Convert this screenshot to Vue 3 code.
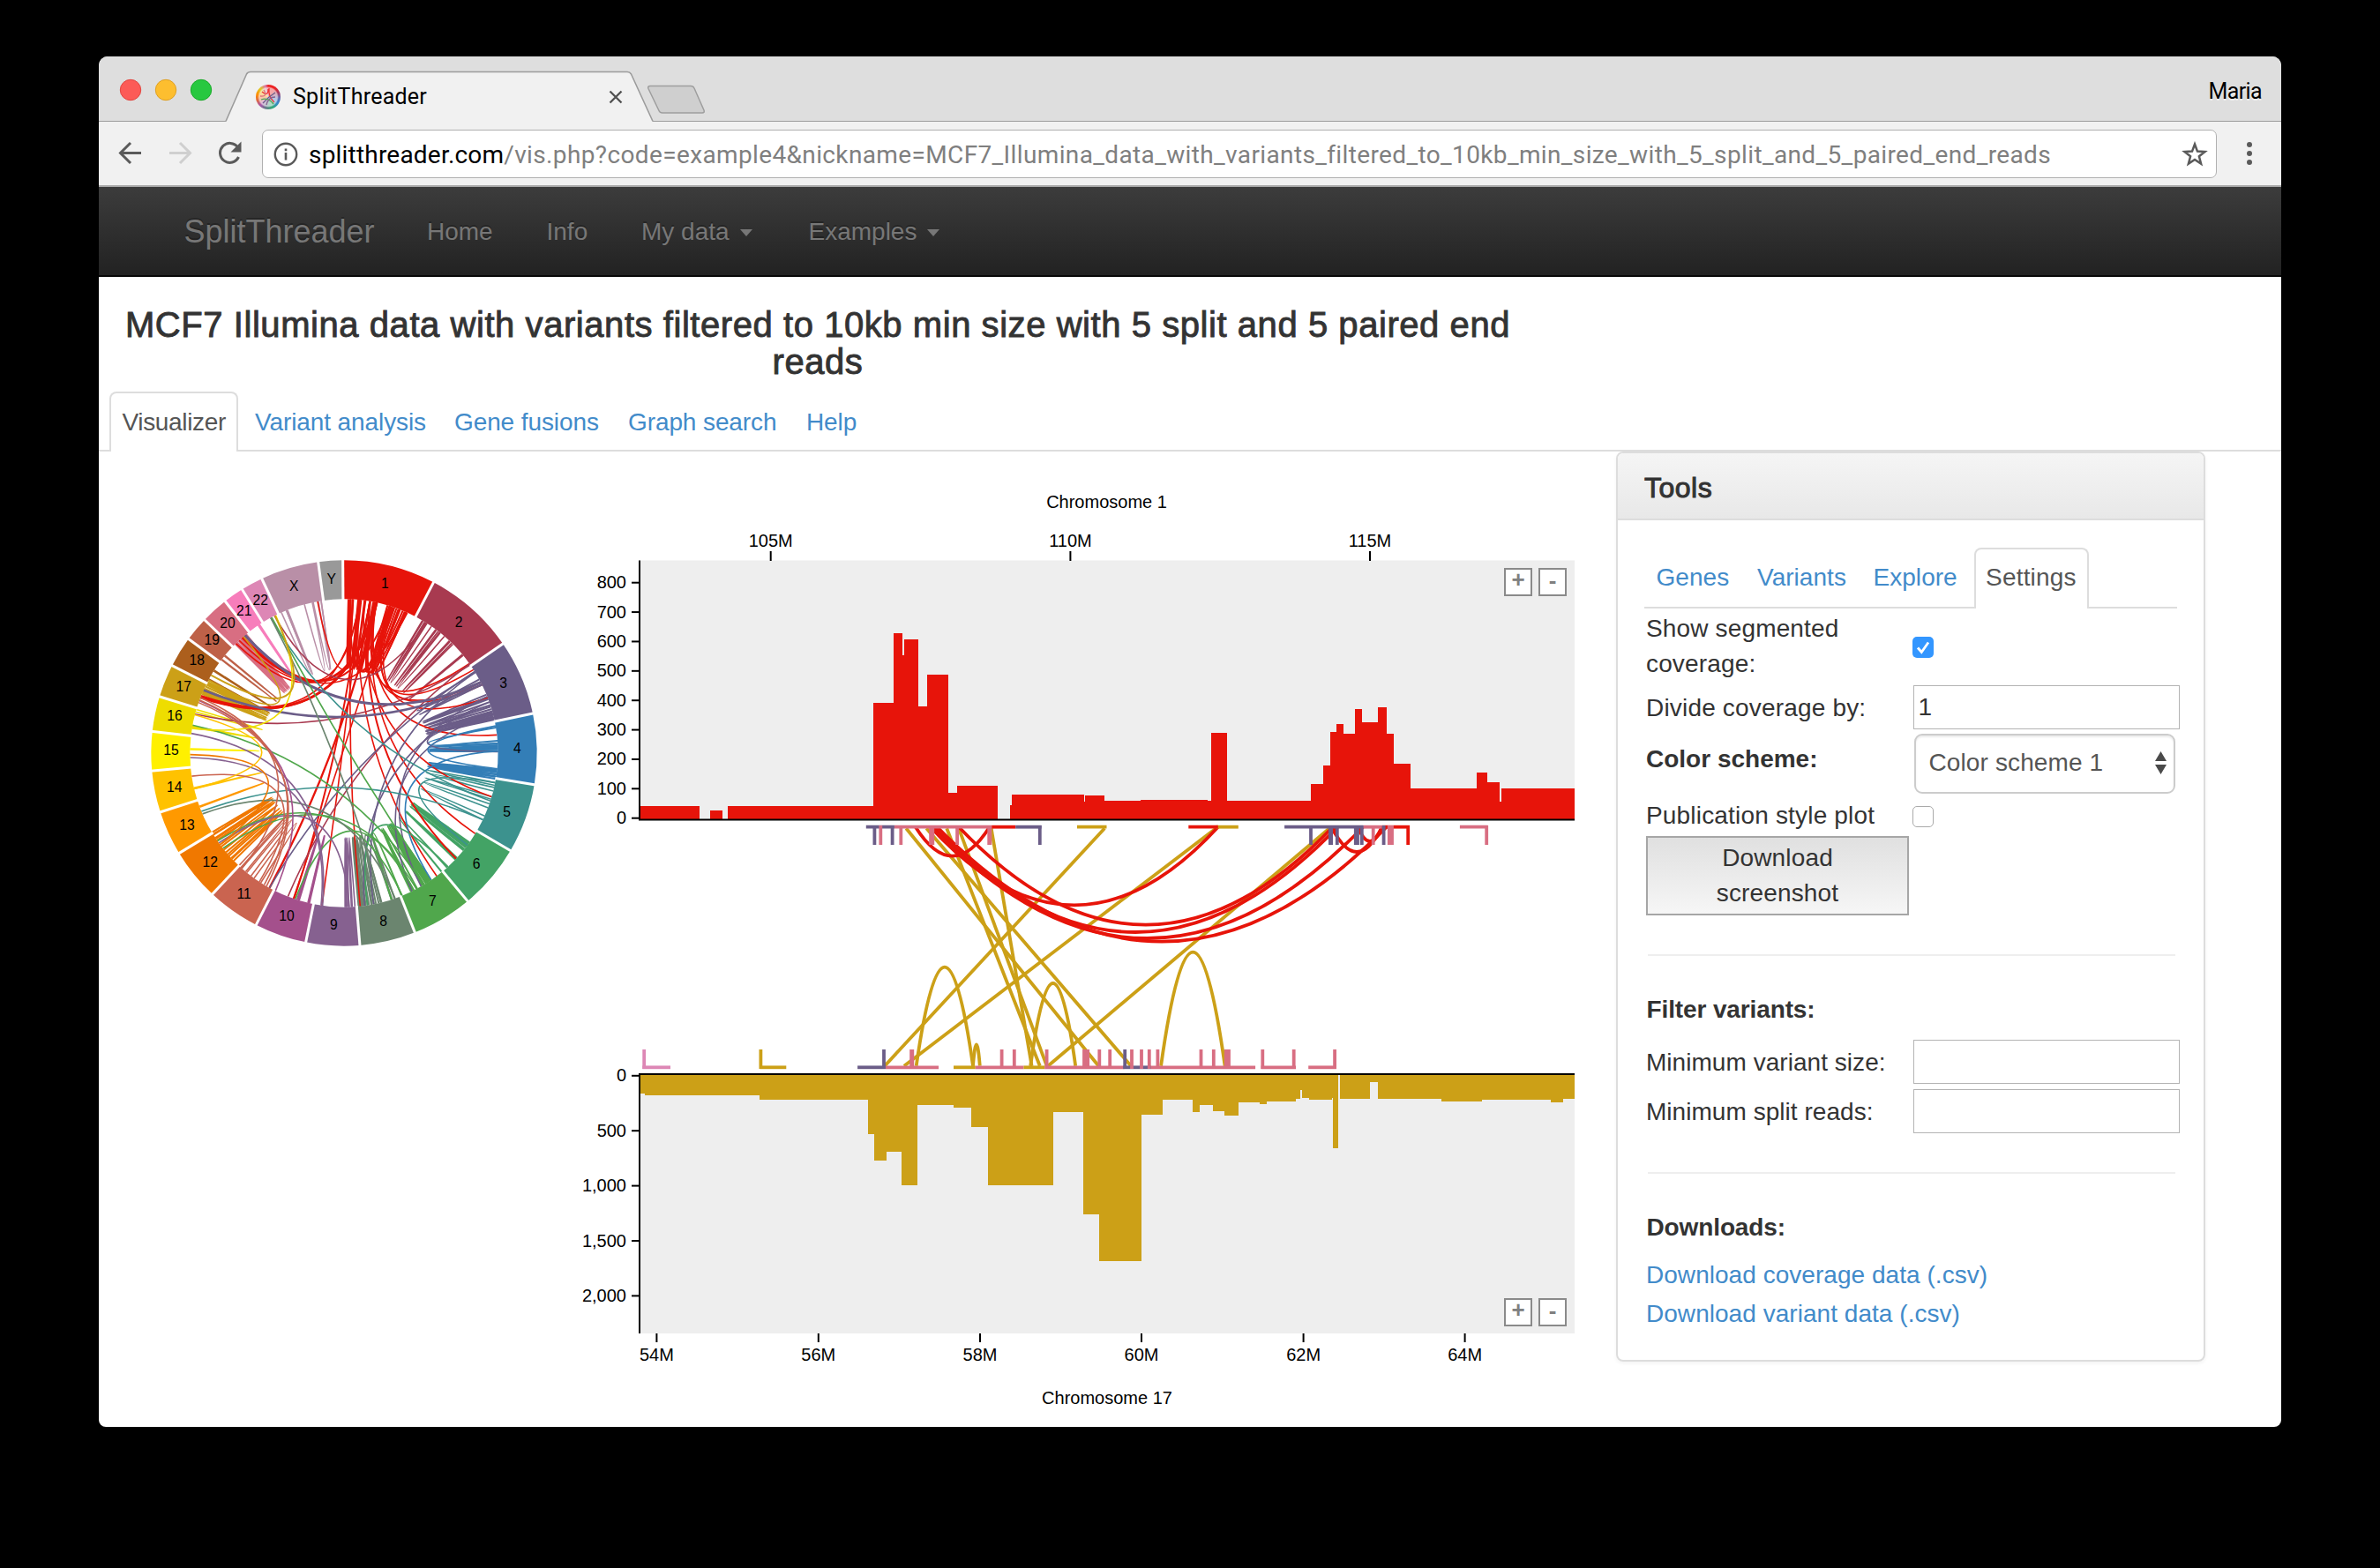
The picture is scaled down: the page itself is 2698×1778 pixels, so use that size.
<script setup>
const path = 'vis.php?code=example4&nickname=MCF7_Illumina_data_with_variants_filtered_to_10kb_min_size_with_5_split_and_5_paired_end_reads'

// ---- genome wheel -------------------------------------------------------
const C = { x: 720, y: 732, outer: 656, inner: 524 }
const colors = {
  1: '#e7140a', 2: '#a83a50', 3: '#6b5d88', 4: '#337eb7', 5: '#3c928e', 6: '#43a365',
  7: '#50a74c', 8: '#6b856f', 9: '#866190', 10: '#a4508c', 11: '#ca6450', 12: '#f07800',
  13: '#ff9900', 14: '#ffc200', 15: '#fff000', 16: '#eedd00', 17: '#cca017', 18: '#ac5f1d',
  19: '#be6148', 20: '#d86e82', 21: '#f77dbb', 22: '#dd87b5', X: '#b98fa7', Y: '#999999'
}
// name, end boundary on the outer rim, label centre
const chroms = [
  ['1', 1024, 152, 859, 155], ['2', 1260, 360, 1110, 287], ['3', 1363, 597, 1262, 493],
  ['4', 1371, 840, 1309, 716], ['5', 1285, 1063, 1274, 931], ['6', 1140, 1235, 1170, 1108],
  ['7', 961, 1342, 1021, 1234], ['8', 774, 1387, 854, 1303], ['9', 590, 1375, 685, 1315],
  ['10', 423, 1312, 525, 1285], ['11', 274, 1210, 380, 1211], ['12', 163, 1070, 265, 1103],
  ['13', 97, 932, 186, 976], ['14', 67, 792, 143, 847], ['15', 68, 658, 132, 721],
  ['16', 94, 540, 144, 605], ['17', 137, 435, 175, 505], ['18', 193, 345, 220, 415],
  ['19', 249, 282, 271, 347], ['20', 316, 216, 324, 290], ['21', 374, 176, 380, 247],
  ['22', 440, 138, 436, 211], ['X', 632, 82, 550, 163], ['Y', 716, 76, 677, 139]
]
const angle = (x, y) => Math.atan2(x - C.x, C.y - y)
const at = (a, r) => [C.x + Math.sin(a) * r, C.y - Math.cos(a) * r]
const f = (n) => n.toFixed(1)
const wheel = chroms.map((c, i) => {
  const prev = chroms[(i + chroms.length - 1) % chroms.length]
  const a0 = angle(prev[1], prev[2])
  const a1 = angle(c[1], c[2])
  const [p, q, r, s] = [at(a0, C.outer), at(a1, C.outer), at(a1, C.inner), at(a0, C.inner)]
  const g0 = at(a1, C.inner - 3)
  const g1 = at(a1, C.outer + 4)
  return {
    name: c[0], lx: c[3], ly: c[4] + 16, fill: colors[c[0]],
    d: `M${f(p[0])} ${f(p[1])}A${C.outer} ${C.outer} 0 0 1 ${f(q[0])} ${f(q[1])}L${f(r[0])} ${f(r[1])}A${C.inner} ${C.inner} 0 0 0 ${f(s[0])} ${f(s[1])}Z`,
    gap: `M${f(g0[0])} ${f(g0[1])}L${f(g1[0])} ${f(g1[1])}`
  }
})
function chord(a, b) {
  const p = at(a, C.inner)
  const q = at(b, C.inner)
  const cx = C.x * 0.9 + ((p[0] + q[0]) / 2) * 0.1
  const cy = C.y * 0.9 + ((p[1] + q[1]) / 2) * 0.1
  return `M${f(p[0])} ${f(p[1])}Q${f(cx)} ${f(cy)} ${f(q[0])} ${f(q[1])}`
}
// short-range variants: chromosome, x, y, angular span in degrees
const local = [
  [15, 197, 720, 0.3], [14, 212, 853, 0.4], [13, 232, 915, 0.4], [16, 207, 645, 0.4], [16, 215, 592, 1],
  [18, 280, 455, 0.4], [18, 262, 485, 0.4], [19, 315, 403, 0.3], [19, 302, 414, 0.3],
  [12, 275, 1010, 1], [12, 283, 1020, 1.6], [12, 290, 1030, 1], [12, 300, 1042, 2], [12, 312, 1060, 1.5], [12, 326, 1075, 1], [12, 336, 1090, 1.2], [12, 345, 1098, 1],
  [11, 370, 1120, 1], [11, 388, 1132, 2], [11, 405, 1148, 2], [11, 440, 1168, 3],
  [10, 565, 1230, 0.5], [10, 568, 1232, 0.3], [10, 603, 1240, 0.4], [10, 600, 1240, 0.3],
  [9, 728, 1253, 0.5], [9, 735, 1253, 0.6], [9, 745, 1253, 1], [9, 757, 1253, 1],
  [8, 775, 1252, 0.6], [8, 780, 1252, 0.8], [8, 786, 1252, 1], [8, 794, 1251, 1.4], [8, 805, 1250, 1.5], [8, 822, 1245, 1], [8, 838, 1243, 2.5], [8, 845, 1241, 5], [8, 890, 1222, 1], [8, 880, 1226, 6],
  [7, 990, 1178, 0.7], [7, 997, 1173, 0.8], [7, 1003, 1169, 0.5], [7, 1009, 1166, 0.8], [7, 1014, 1162, 1], [7, 955, 1197, 1], [7, 967, 1190, 2], [7, 915, 1215, 4],
  [6, 1145, 1035, 0.5], [6, 1140, 1042, 0.6], [6, 1135, 1048, 0.5], [6, 1128, 1057, 0.6], [6, 1100, 1090, 0.4], [6, 1103, 1087, 0.5], [6, 1072, 1123, 2.6],
  [5, 1232, 832, 1], [5, 1228, 848, 1.4], [5, 1222, 880, 1], [5, 1216, 905, 1.6], [5, 1196, 945, 1.5],
  [4, 1243, 690, 1], [4, 1243, 705, 0.6], [4, 1244, 712, 0.6], [4, 1244, 718, 0.7], [4, 1240, 788, 0.6], [4, 1239, 797, 0.8], [4, 1238, 804, 0.8], [4, 1237, 812, 0.8], [4, 1236, 645, 6],
  [3, 1165, 458, 3], [3, 1185, 490, 1], [3, 1200, 535, 1], [3, 1205, 545, 0.6], [3, 1210, 560, 1.2], [3, 1215, 575, 1], [3, 1222, 590, 0.7], [3, 1224, 598, 0.5], [3, 1228, 606, 0.7], [3, 1230, 612, 0.7],
  [2, 985, 283, 0.3], [2, 993, 288, 0.5], [2, 1001, 292, 2], [2, 1031, 312, 0.4], [2, 1040, 318, 0.6], [2, 1047, 323, 2], [2, 1078, 350, 0.4], [2, 1086, 358, 0.6], [2, 1120, 398, 0.5],
  [20, 352, 362, 0.5], [20, 358, 357, 0.8], [20, 364, 350, 0.8], [20, 372, 344, 0.9], [20, 378, 339, 0.6], [20, 384, 334, 0.7], [21, 430, 300, 0.3], [21, 433, 300, 0.3],
  [17, 240, 532, 0.6], [17, 242, 526, 0.6], [17, 245, 517, 0.5], [17, 248, 505, 0.8], [17, 252, 498, 0.6], [17, 256, 490, 0.8],
  ['X', 508, 256, 2], ['X', 525, 250, 0.5], ['X', 585, 225, 3], ['X', 615, 218, 3], ['X', 633, 215, 1],
  [1, 735, 208, 0.6], [1, 742, 208, 1], [1, 750, 208, 2], [1, 771, 210, 0.8], [1, 775, 210, 2], [1, 790, 212, 2], [1, 808, 215, 2], [1, 820, 217, 1],
  [1, 826, 218, 0.6], [1, 830, 218, 7], [1, 832, 218, 9], [1, 868, 229, 1], [1, 875, 231, 4], [1, 880, 233, 6], [1, 890, 236, 1], [1, 905, 242, 3], [1, 770, 210, 13], [1, 742, 208, 20], [1, 822, 217, 12]
]
// chromosomes whose short-range variants pile up into thick bundles
const dense = [1, 3, 4, 6, 7, 8, 12, 17, 20]
// long-range variants: chromosome colour, x1, y1, x2, y2, width
const long = [
  [1, 828, 218, 235, 542, 8], [1, 833, 218, 236, 546, 6], [1, 773, 210, 238, 538],
  [1, 828, 218, 375, 340, 8], [1, 832, 218, 365, 350], [1, 773, 210, 355, 362], [1, 875, 232, 385, 334, 6], [1, 935, 255, 378, 339],
  [1, 808, 215, 630, 216], [1, 775, 210, 550, 1228, 6], [1, 875, 232, 548, 1226],
  [1, 830, 218, 468, 1188, 7], [1, 775, 210, 645, 1248], [1, 748, 208, 775, 1253],
  [1, 770, 210, 1035, 1150], [1, 810, 215, 1100, 1090, 6], [1, 826, 218, 1165, 1005],
  [1, 790, 212, 1220, 880], [1, 830, 218, 1240, 670], [1, 875, 232, 1165, 445],
  [1, 882, 234, 1203, 545], [1, 830, 218, 1185, 492], [1, 868, 229, 1188, 500], [1, 822, 217, 1150, 425],
  [2, 1148, 432, 215, 600], [2, 1145, 430, 530, 1218], [2, 1000, 292, 485, 268],
  [3, 1187, 490, 385, 333, 9], [3, 1190, 498, 243, 518, 8], [3, 1163, 455, 468, 1188], [3, 1210, 560, 790, 1250],
  [3, 1165, 458, 820, 1243], [3, 1225, 600, 950, 1200], [3, 1205, 540, 980, 1182], [3, 1220, 600, 1243, 727],
  [4, 1243, 725, 1015, 1162, 5], [4, 1240, 785, 1232, 640],
  [5, 1218, 895, 472, 275], [5, 1192, 958, 235, 930], [5, 1230, 832, 1140, 1045],
  [6, 1075, 1120, 800, 1250],
  [7, 205, 637, 990, 1178, 5], [7, 475, 272, 1012, 1164, 5], [7, 290, 1030, 918, 1217], [7, 308, 1056, 965, 1192], [7, 555, 1228, 958, 1198],
  [8, 471, 272, 848, 1240, 5], [8, 240, 938, 893, 1224, 5],
  [9, 197, 747, 642, 1249], [9, 200, 665, 647, 1250, 5], [9, 295, 1037, 738, 1254, 5],
  [10, 231, 555, 487, 1200], [11, 231, 562, 458, 1182], [11, 233, 553, 450, 1178], [11, 205, 810, 432, 1170], [11, 236, 545, 375, 1122],
  [12, 197, 737, 300, 1042], [14, 212, 853, 215, 602], [16, 206, 648, 490, 268], [17, 270, 468, 487, 268, 6], [17, 256, 490, 380, 338]
]
const links = [
  ...local.map(([c, x, y, w]) => ({ d: chord(angle(x, y), angle(x, y) + (w * Math.PI) / 180), c: colors[c], w: dense.includes(c) ? 6.2 : 4.8 })),
  ...long.map(([c, a, b, x, y, w]) => ({ d: chord(angle(a, b), angle(x, y)), c: colors[c], w: w || 4.8 }))
]

// ---- coverage tracks ----------------------------------------------------
// each step: right edge, height edge
const topSteps = [
  [793, 914], [805, 929], [819, 919], [825, 929], [990, 914], [1013, 797], [1023, 718], [1025, 743], [1041, 725], [1051, 801],
  [1075, 765], [1085, 899], [1131, 891], [1145, 929], [1147, 913], [1229, 901], [1230, 909], [1252, 902], [1293, 908],
  [1369, 907], [1373, 908], [1391, 831], [1486, 908], [1500, 889], [1508, 868], [1515, 830], [1523, 821], [1536, 832],
  [1544, 804], [1562, 819], [1572, 802], [1580, 832], [1599, 866], [1674, 894], [1686, 876], [1700, 887], [1702, 909], [1785, 894]
]
const bottomSteps = [
  [731, 1240], [861, 1242], [984, 1247], [991, 1286], [1005, 1316], [1022, 1306], [1040, 1344], [1081, 1253], [1101, 1256],
  [1120, 1278], [1194, 1344], [1228, 1261], [1246, 1377], [1294, 1430], [1318, 1264], [1352, 1247], [1360, 1261], [1375, 1253],
  [1388, 1260], [1404, 1265], [1428, 1250], [1436, 1252], [1469, 1249], [1474, 1246], [1476, 1236], [1484, 1245], [1510, 1247],
  [1511, 1245], [1517, 1302], [1519, 1219], [1553, 1246], [1562, 1227], [1634, 1246], [1680, 1249], [1758, 1247], [1772, 1250], [1785, 1246]
]
const area = (steps, base) => `M726 ${base}` + steps.map(([x, y]) => `V${y}H${x}`).join('') + `V${base}Z`
const topY = [800, 700, 600, 500, 400, 300, 200, 100, 0].map((v) => ({ v, y: 927.7 - v * 0.33375 }))
const bottomY = ['0', '500', '1,000', '1,500', '2,000'].map((v, i) => ({ v, y: 1219.8 + i * 62.4 }))
const topX = [['105M', 873.7], ['110M', 1213.4], ['115M', 1553]]
const bottomX = [['54M', 744.4], ['56M', 927.8], ['58M', 1111], ['60M', 1294], ['62M', 1477.6], ['64M', 1660.6]]

const red = colors[1], gold = colors[17], pink = colors[20], purple = colors[3]
const px = (v) => +(940 + v / 2.1778).toFixed(1)
const py = (v) => +(910 + v / 3).toFixed(1)
const lines = [[680, 137], [955, 185], [1235, 540], [190, 665], [240, 745], [290, 520], [320, 537], [400, 500]]
  .map(([a, b]) => `M${px(a)} ${py(88)}L${px(b)} ${py(896)}`)
const arc = (x1, x2, y, peak) => `M${px(x1)} ${py(y)}Q${px((x1 + x2) / 2)} ${py(2 * peak - y)} ${px(x2)} ${py(y)}`
const goldArcs = [arc(215, 355, 896, 560), arc(355, 372, 896, 823), arc(497, 608, 896, 615), arc(819, 977, 896, 509)]
const redArcs = [arc(213, 396, 83, 182), arc(250, 960, 83, 349), arc(320, 1243, 83, 416), arc(257, 1255, 83, 441), arc(252, 1318, 83, 462), arc(266, 1376, 83, 473), arc(1240, 1365, 83, 168), arc(1305, 1365, 83, 132)]
const bars = [
  [purple, 91, 161, 83], [pink, 161, 401, 83], [red, 401, 460, 83], [purple, 460, 524, 83], [gold, 612, 685, 83], [gold, 955, 1010, 83], [red, 887, 960, 83],
  [purple, 1124, 1318, 83], [pink, 1318, 1365, 83], [red, 1365, 1433, 83], [pink, 1557, 1626, 83],
  ['#dd87b5', -461, -392, 901], [gold, -171, -106, 901], [purple, 70, 139, 901], [pink, 139, 270, 901], [gold, 307, 361, 901], [pink, 361, 480, 901],
  [gold, 480, 532, 901], [pink, 532, 728, 901], [purple, 726, 795, 901], [pink, 795, 1052, 901], [pink, 1066, 1152, 901], [pink, 1183, 1252, 901]
].map(([c, a, b, y]) => ({ c, d: `M${px(a)} ${py(y)}H${px(b)}` }))
const ticks = [
  [purple, 112, 0], [purple, 156, 0], [purple, 520, 0], [purple, 1189, 0], [purple, 1238, 0, 5], [purple, 1254, 0], [purple, 1302, 0, 6], [purple, 1315, 0], [purple, 1369, 0],
  [pink, 127, 0], [pink, 177, 0], [pink, 253, 0, 6], [pink, 316, 0], [pink, 396, 0, 5], [pink, 1343, 0], [pink, 1386, 0, 7], [pink, 1623, 0], [red, 1429, 0],
  ['#dd87b5', -457, 1], [gold, -169, 1], [purple, 135, 1], [pink, 204, 1, 5], [pink, 426, 1], [pink, 457, 1], [pink, 537, 1], [pink, 634, 1, 8], [pink, 667, 1], [pink, 693, 1],
  [purple, 730, 1], [pink, 747, 1], [pink, 771, 1], [pink, 790, 1], [pink, 811, 1], [pink, 918, 1], [pink, 949, 1], [pink, 983, 1, 7], [pink, 1070, 1], [pink, 1147, 1], [pink, 1248, 1]
].map(([c, x, low, w]) => ({ c, w: w || 3.8, d: low ? `M${px(x)} 1190V1212` : `M${px(x)} 936V958` }))
const zooms = [['+', 1721, 644, 666], ['-', 1760, 644, 667], ['+', 1721, 1472, 1494], ['-', 1760, 1472, 1495]]
</script>

<template>
  <div class="desktop">
    <div class="window">
      <div class="tabstrip">
        <svg class="strip-art" width="760" height="74" viewBox="112 64 760 74">
          <g stroke-width="1">
            <circle cx="148" cy="102" r="11.7" fill="#fc5b57" stroke="#e24640" />
            <circle cx="188" cy="102" r="11.7" fill="#fdbe2f" stroke="#dfa023" />
            <circle cx="228" cy="102" r="11.7" fill="#27c840" stroke="#1aab29" />
          </g>
          <path d="M256 138L279.500 84Q281 81.500 284 81.500H711Q714 81.500 715.500 84L740 138Z" fill="#f1f1f1" />
          <path d="M256 137.500L279.500 84Q281 81.500 284 81.500H711Q714 81.500 715.500 84L740 137.500" fill="none" stroke="#9c9c9c" stroke-width="1.6" />
          <path d="M737 97.500H783Q786 97.500 787 100L798 125Q799 128 796 128H751Q748 128 747 125.500L735 100.500Q734 97.500 737 97.500Z" fill="#cfcfcf" stroke="#9e9e9e" stroke-width="1.5" />
          <path d="M691.500 103.500L704.500 116.500M704.500 103.500L691.500 116.500" stroke="#505050" stroke-width="2.3" />
        </svg>
        <div class="tab-label">
          <i class="favicon">
            <svg width="28" height="28" viewBox="0 0 28 28" fill="none" stroke-width="1.3">
              <path d="M14 5Q14 14 7 8M15 4Q14 14 21 20" stroke="#e33" />
              <path d="M22 9Q14 14 8 21" stroke="#6b5d88" />
              <path d="M6 17Q14 14 20 22" stroke="#50a74c" />
              <path d="M12 23Q14 14 22 14" stroke="#866190" />
              <path d="M5 13Q14 14 9 6" stroke="#d86e82" />
            </svg>
          </i>
          <span>SplitThreader</span>
        </div>
        <span class="profile">Maria</span>
      </div>

      <div class="toolbar">
        <svg class="nav-icons" width="185" height="72" viewBox="112 138 185 72" fill="none" stroke-width="3">
          <path d="M160 173.500H137M148 162L136.500 173.500L148 185" stroke="#5a5a5a" />
          <path d="M192 173.500H215M204 162L215.500 173.500L204 185" stroke="#cfcfcf" />
          <path d="M269.500 167A11 11 0 1 0 270.500 178" stroke="#5a5a5a" />
          <path d="M273.500 160.500V172.500H261.500Z" fill="#5a5a5a" />
        </svg>
        <div class="omnibox">
          <svg width="28" height="28" viewBox="0 0 28 28">
            <circle cx="14" cy="14" r="12.200" fill="none" stroke="#5a5a5a" stroke-width="2.400" />
            <path d="M14 12V20.500M14 7.500V10.200" stroke="#5a5a5a" stroke-width="2.600" />
          </svg>
          <span class="url"><b>splitthreader.com</b><em>/{{ path }}</em></span>
          <svg class="star" width="30" height="30" viewBox="0 0 30 30">
            <path d="M15 3.500L18 11.600L26.500 12L19.900 17.300L22.100 25.600L15 20.900L7.900 25.600L10.100 17.300L3.500 12L12 11.600Z" fill="none" stroke="#5a5a5a" stroke-width="2.500" />
          </svg>
        </div>
        <div class="menu"><i></i><i></i><i></i></div>
      </div>

      <nav class="navbar">
        <span class="brand">SplitThreader</span>
        <span>Home</span>
        <span>Info</span>
        <span>My data<i class="caret"></i></span>
        <span>Examples<i class="caret"></i></span>
      </nav>

      <h3 class="title">MCF7 Illumina data with variants filtered to 10kb min size with 5 split and 5 paired end reads</h3>

      <div class="page-tabs">
        <span class="active">Visualizer</span>
        <a>Variant analysis</a>
        <a>Gene fusions</a>
        <a>Graph search</a>
        <a>Help</a>
      </div>

      <main class="content">
        <svg class="wheel" width="480" height="480" viewBox="0 0 1440 1440">
          <path v-for="(l, i) in links" :key="'l' + i" :d="l.d" :stroke="l.c" :stroke-width="l.w" fill="none" />
          <path v-for="c in wheel" :key="c.name" :d="c.d" :fill="c.fill" />
          <path v-for="c in wheel" :key="'g' + c.name" :d="c.gap" stroke="#fff" stroke-width="9" />
          <text v-for="c in wheel" :key="'t' + c.name" :x="c.lx" :y="c.ly" font-size="47" text-anchor="middle">{{ c.name }}</text>
        </svg>

        <svg class="tracks" width="1160" height="1078" viewBox="640 540 1160 1078" font-size="20">
          <rect x="725" y="635.500" width="1060" height="294" fill="#eee" />
          <rect x="725" y="1218" width="1060" height="294" fill="#eee" />
          <path :d="area(topSteps, 929)" :fill="red" shape-rendering="crispEdges" />
          <path :d="area(bottomSteps, 1219)" :fill="gold" shape-rendering="crispEdges" />

          <g fill="none" stroke-width="3.800">
            <path v-for="(d, i) in lines" :key="'s' + i" :d="d" :stroke="gold" />
            <path v-for="(d, i) in goldArcs" :key="'ga' + i" :d="d" :stroke="gold" />
            <path v-for="(d, i) in redArcs" :key="'ra' + i" :d="d" :stroke="red" />
            <path v-for="(b, i) in bars" :key="'b' + i" :d="b.d" :stroke="b.c" />
            <path v-for="(t, i) in ticks" :key="'k' + i" :d="t.d" :stroke="t.c" :stroke-width="t.w" />
          </g>

          <g stroke="#000" stroke-width="2" fill="none">
            <path d="M725 635.500V929.500H1785M725 1512V1218H1785" />
            <path v-for="t in topY" :key="'ty' + t.v" :d="`M716 ${t.y}H725`" />
            <path v-for="t in bottomY" :key="'by' + t.v" :d="`M716 ${t.y}H725`" />
            <path v-for="t in topX" :key="t[0]" :d="`M${t[1]} 625V636`" />
            <path v-for="t in bottomX" :key="t[0]" :d="`M${t[1]} 1512V1522`" />
          </g>
          <g text-anchor="end">
            <text v-for="t in topY" :key="'tl' + t.v" x="710" :y="t.y + 6.500">{{ t.v }}</text>
            <text v-for="t in bottomY" :key="'bl' + t.v" x="710" :y="t.y + 6.500">{{ t.v }}</text>
          </g>
          <g text-anchor="middle">
            <text v-for="t in topX" :key="'xl' + t[0]" :x="t[1]" y="620">{{ t[0] }}</text>
            <text v-for="t in bottomX" :key="'xb' + t[0]" :x="t[1]" y="1542.500">{{ t[0] }}</text>
            <text x="1254.500" y="576">Chromosome 1</text>
            <text x="1255" y="1592">Chromosome 17</text>
          </g>
          <g v-for="(z, i) in zooms" :key="'z' + i">
            <rect :x="z[1] - 15" :y="z[2] + 1" width="30" height="30" fill="#fff" stroke="#8a8a8a" stroke-width="2" />
            <text :x="z[1]" :y="z[3]" text-anchor="middle" fill="#808080" font-size="26" font-weight="bold">{{ z[0] }}</text>
          </g>
        </svg>

        <aside class="panel">
          <header>Tools</header>
          <div class="body">
            <div class="tool-tabs">
              <a>Genes</a><a>Variants</a><a>Explore</a><span class="active">Settings</span>
            </div>
            <div class="row r-seg">
              <label>Show segmented coverage:</label>
              <span class="check on"><svg width="24" height="24" viewBox="0 0 24 24"><path d="M6 12.500L10.300 17.500L18 6.500" fill="none" stroke="#fff" stroke-width="2.800" /></svg></span>
            </div>
            <div class="row r-div"><label>Divide coverage by:</label><span class="input">1</span></div>
            <div class="row r-color">
              <label>Color scheme:</label>
              <span class="select">Color scheme 1
                <svg width="13" height="26" viewBox="0 0 13 26"><path d="M6.500 0L13 11H0ZM0 15H13L6.500 26Z" fill="#4a4a4a" /></svg>
              </span>
            </div>
            <div class="row r-pub"><label>Publication style plot</label><span class="check"></span></div>
            <div class="button">Download<br />screenshot</div>
            <div class="rule"></div>
            <div class="sub s-filter">Filter variants:</div>
            <div class="row r-min"><label>Minimum variant size:</label><span class="input"></span></div>
            <div class="row r-split"><label>Minimum split reads:</label><span class="input"></span></div>
            <div class="rule"></div>
            <div class="sub s-down">Downloads:</div>
            <a class="link">Download coverage data (.csv)</a>
            <a class="link">Download variant data (.csv)</a>
          </div>
        </aside>
      </main>
    </div>
  </div>
</template>

<style>
body { margin: 0; background: #000; }
</style>

<style scoped>
.desktop { width: 2698px; height: 1778px; box-sizing: border-box; padding: 64px 112px 0; background: #000; overflow: hidden; font-family: "Liberation Sans", Arial, sans-serif; font-size: 28px; color: #333; }
.desktop * { box-sizing: border-box; }
.window { width: 2474px; height: 1554px; background: #fff; border-radius: 10px 10px 8px 8px; overflow: hidden; }
.tabstrip { position: relative; display: flex; justify-content: space-between; height: 74px; background: linear-gradient(#9c9c9c, #9c9c9c) 0 100% / 100% 1.500px no-repeat #dedede; font-family: Roboto, sans-serif; color: #000; }
.strip-art { display: block; height: 74px; flex: none; }
.tab-label { position: absolute; left: 178px; top: 32px; display: flex; align-items: center; gap: 14px; height: 28px; font-size: 25px; line-height: 28px; letter-spacing: 0.250px; }
.favicon { width: 28px; height: 28px; border-radius: 50%; background: radial-gradient(circle, rgba(255,255,255,.6) 0 52%, transparent 60%), conic-gradient(#e22 0 10%, #a35 18%, #66a 26%, #38c 34%, #3a7 44%, #678 54%, #a5a 62%, #d64 70%, #f80 78%, #dc2 88%, #d7a 96%, #e22); }
.favicon svg { display: block; }
.profile { margin-right: 22px; font-size: 25px; line-height: 28px; padding-top: 26px; letter-spacing: -0.600px; text-shadow: 0 2px 0 rgba(255,255,255,.5); }
.toolbar { display: flex; height: 74px; background: #f1f1f1; border-bottom: 2px solid #a9a9a9; }
.nav-icons { flex: none; }
.omnibox { display: flex; align-items: center; width: 2216px; height: 55px; margin-top: 9px; border: 1.600px solid #b0b0b0; border-radius: 7px; background: #fff; padding-left: 12px; }
.url { margin-left: 12px; flex: 1; font-family: Roboto, sans-serif; font-size: 28px; white-space: nowrap; line-height: 32px; letter-spacing: 0.200px; padding-top: 2px; }
.url b { font-weight: 400; color: #000; }
.url em { font-style: normal; color: #7f7f7f; letter-spacing: 0.370px; }
.star { margin-right: 9px; }
.menu { display: flex; flex-direction: column; gap: 4px; margin: 23px 0 0 34px; }
.menu i { width: 6px; height: 6px; border-radius: 50%; background: #5a5a5a; }
.navbar { display: grid; grid-template-columns: 275.500px 135.500px 107.500px 189.500px auto; align-items: center; height: 102px; padding: 0 0 0 96.500px; background: linear-gradient(#3c3c3c, #222); border-bottom: 2px solid #080808; color: #777; text-shadow: 0 -2px 0 rgba(0,0,0,.25); line-height: 41px; }
.brand { font-size: 36px; }
.caret { display: inline-block; border: 7.500px solid transparent; border-top: 8px solid #777; border-bottom: 0; margin-left: 12px; vertical-align: 4px; }
.title { width: 1600px; margin: 33px 0 0 15px; font-size: 40px; line-height: 42px; font-weight: 400; -webkit-text-stroke: 0.900px #333; text-align: center; letter-spacing: 0.560px; }
.page-tabs { display: grid; grid-template-columns: 146px 226px 197px 202px auto; height: 68px; margin-top: 13px; padding-left: 12px; border-bottom: 2px solid #ddd; line-height: 69px; letter-spacing: -0.100px; white-space: nowrap; }
.page-tabs a { padding-left: 19px; }
a { color: #428bca; }
.active { height: 68px; border: 2px solid #ddd; border-bottom: 0; border-radius: 8px 8px 0 0; background: #fff; color: #555; line-height: 65px; padding-left: 14px; }
.page-tabs .active { letter-spacing: -0.350px; padding-left: 12.500px; }
.content { display: flex; align-items: flex-start; height: 1106px; }
.content svg text { font-family: "Liberation Sans", Arial, sans-serif; }
.wheel { flex: none; margin: 98px 0 0 38px; }
.tracks { flex: none; margin: 28px 0 0 10px; }
.panel { flex: none; width: 668px; height: 1032px; margin-left: 32px; border: 2px solid #ddd; border-radius: 8px; box-shadow: 0 2px 4px rgba(0,0,0,.05); }
.panel header { height: 76px; padding: 0 0 0 30px; border-bottom: 2px solid #ddd; border-radius: 6px 6px 0 0; background: linear-gradient(#f5f5f5, #e8e8e8); font-size: 32px; line-height: 78px; letter-spacing: 0.500px; -webkit-text-stroke: 1px #333; }
.body { display: flex; flex-direction: column; padding: 31px 0 0 30px; letter-spacing: 0.040px; }
.tool-tabs { display: grid; grid-template-columns: 114.500px 131.500px 128px 130px; width: 604px; height: 69px; border-bottom: 2px solid #ddd; line-height: 67px; }
.tool-tabs a { padding-left: 13.500px; }
.tool-tabs .active { height: 69px; padding-left: 11px; line-height: 63px; letter-spacing: 0.200px; }
.row { display: grid; grid-template-columns: 302.500px 302px; align-items: center; padding-left: 2px; line-height: 40px; }
.row label { padding-right: 60px; white-space: nowrap; position: relative; top: 1px; }
.r-seg { height: 80px; margin-top: 2px; }
.r-seg label { white-space: normal; letter-spacing: 0.150px; }
.r-pub label, .r-div label { letter-spacing: 0.180px; }
.check { width: 24px; height: 24px; margin: 3px 0 0 -1px; border: 1.500px solid #aaa; border-radius: 5px; background: #fff; }
.check.on { border: 0; background: #3396ff; }
.check svg { display: block; }
.input { width: 302px; height: 50px; border: 1.500px solid #b4b4b4; line-height: 48px; padding-left: 5px; background: #fff; }
.r-div { height: 50px; margin-top: 5px; }
.r-color { height: 68px; margin-top: 5px; }
.r-color label { font-weight: 700; padding-bottom: 12px; letter-spacing: 0; }
.select { display: flex; justify-content: space-between; align-items: center; width: 296px; height: 68px; margin-left: 1px; border: 2px solid #ccc; border-radius: 9px; padding: 0 8px 3px 15px; color: #555; letter-spacing: 0.120px; box-shadow: inset 0 2px 2px rgba(0,0,0,.075); }
.r-pub { height: 40px; margin-top: 4px; }
.button { width: 298px; height: 90px; margin: 4px 0 0 2px; padding-top: 3px; border: 2px solid #a6a6a6; background: linear-gradient(#e0e0e0, #f6f6f6); text-align: center; line-height: 40px; letter-spacing: 0.150px; }
.rule { width: 598px; height: 2px; margin: 44px 0 0 4px; background: #eee; }
.sub { padding-left: 2.500px; line-height: 40px; font-weight: 700; margin-top: 41px; letter-spacing: -0.120px; }
.r-min { height: 50px; margin-top: 14px; }
.r-split { height: 50px; margin-top: 6px; }
.s-down { margin-bottom: 12px; }
.link { padding-left: 2px; line-height: 44px; }
</style>
